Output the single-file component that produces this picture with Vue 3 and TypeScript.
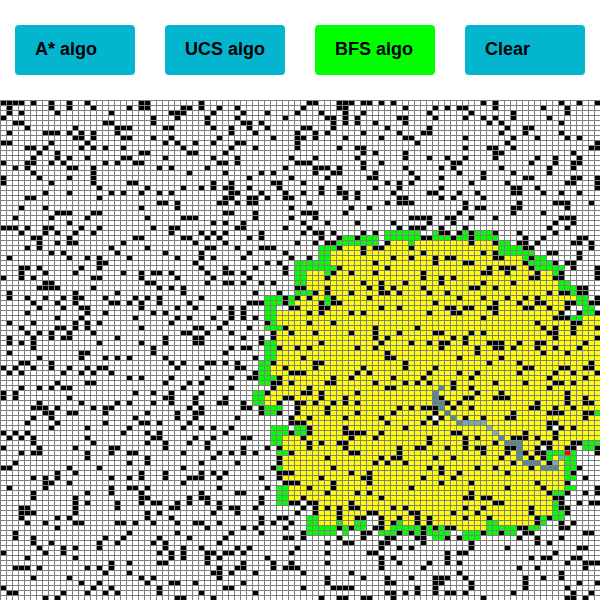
<script setup lang="ts">
import { ref } from 'vue'

interface Block { col: number; row: number; cells: string }

const CELL_W = 6
const CELL_H = 5

const buttons = ['A* algo', 'UCS algo', 'BFS algo', 'Clear']
const active = ref('BFS algo')

// Walls by block: rows are separated by "/", each lists column offsets.
const wallBlocks: Block[] = [
  { col: 0, row: 0, cells: `0-3 5 8 11 14 23-24 33/1 8 11 15 21 23-24 30-31 33 36 39/1 3 9 18 28-30 35/0 25 29 34 39/2-3 17-18 25 34/4 12 19-21 27-28 35 38/1 7-9 11 13 15 19 38/12-13 15 20-21 25 28 36/0-1 8 14 27 29 32 35 39/4-5 7 13 15 17 20 30 38/6 9 23-24 31-32 37/5 9 11 14 20-21 27 35 39/0 4-5 8 10 17 19 22-23 36-37 39/2 4 11-12 15 26 28 34/5 15 31 37/0 6 11 15/0 8 15 21-22 35 38/16 24 30 33 35 37-38/7 11 18 20 23 26 28 38-39/4-5 16 37-38/26-27 29 36-37 39/3 7 23 29/9-11 15-16 37-38/2 8 14 24 30-32/11 35 37/0-2 4 7-8 13 16 25 28-29 39/3 7 9 12 15 28 33 35 37/5-6 11 22-23 30-31 34 36/6 9 11-12 20 32 37/4 6 18 24 34-35 39/8 10 19 27 33/1 11 14 16 21 29 33 35/16-17 32/3-4 6 13 16 33 37` },
  { col: 0, row: 34, cells: `3 7 12 20 23 25-26 28 34 37-38/0 3 5 15-16 23 29 35/7-8 24-25 34 37-38/6-9 15 26 28 30/1 12 19 30/1 4 7 10 12-13 17 22 24 26 33/5 9 12 18-19 21 23 26 31/6 10 13-14 23 29 32 36 38/4 14 17 25 27 38/9 13 22 29 31 35 38/1 5 12 14 16 28 37/3 9-10 12 14 23 32-33 36/4 6 8 11 15 30-31 34 38/1 5 8 10-11 19 27 32-33/1 3 5 16 23 27 32-33/5 25 38/1 13-14 25 37/6 13 17 19 21 27/3-4 8 28 30 34-35 37 39/0 2 5 8 11 14 16-17 29 33 39/1 3 10 13 15 18/21 23 28 34 38/9 14-15 27 31 33/3 6 8 10-11 30 38/0 2 22 25 28 33/0 2 11 27-28 32 37/6 13 19 21 25 28 32 36-37/5-7 9 15 17-18 31 33/7-8 11-12 17 24 29 32-33/5 8 22 29 32 39/4 9 17 23-24 26 31/8 14 21 30 33 35 38/0 2 4 20 24 26 37/1 3 5 14 25-26 32 35` },
  { col: 0, row: 68, cells: `5 15 24 27 31 34/0 6 12 18-19 27 34/3 5-6 14 18 21-22 30 36 38/14 24 35/2 21 24 33 39/0-1 11 16 30/9 12 23 27 33 35 37/5 7 9 18 21 23 27 31-33 36/7-8 11 30/1 7 18 21-22 24 36/5 14 18 23 33 39/5 12 23-24 31 33-34/12 14 19 23 25-26 29 31 34 36/3-4 12 19 28-29 36 38-39/3-5 12 24 26 35 39/3 9 11 24 28/4 7 12-13 19-20 22 25 29 32-33 36/9 34/2 21 29 38/2 5 17 20 26 31 37/5 8 16 19 25 27 36/6 10 12 16 27 30 33 39/0 7 10 26 28 30 34-35 37-38/4 12 28 30 34 36/18 21 26-27 34/2-4 6 14 16 18 36 39/17 21 35-36 38/5 11 23 25 36/13 16 24 28-29 32/0 15 18 26 37-38/1-2 10 14 17 19 26 33/7 9 29-30 35` },
  { col: 40, row: 0, cells: `11-12 16-18 20-21 23 25 40 42 53 56 59/10 16-17 27 32 34 36-37 42 50 54/0 4 9 13 17 20 31 38 45 54/7 14-15 17 19 26-27 32 37 40 42 45 51/0-1 3 15 17 19 22 27 41 43 53/1 4 10-11 15 24 31 44 47-48/2 9 12 14 20 26 30-31 43 47 53/5 9-10 12 17 23 27-28 37 45 49 54 56/0 9 29 44 59/2 9 16 19-20 37 41-42 45 58-59/20 22 27 42-43 55/8 12 19 27 31 34 37 42 49 52 56/9-11 20 23 35-36 48 52 55-56/7 12-14 16 20 27 33 35 43 51 55/3 5 12 15-16 22 28 36 40 45 51/1 8 14 21-22 29 33 40 47-48 55-56 59/5-6 10 24 26 28 38 44 54-55 59/1 6 13 16 22 26 33 45-46 49 59/3 7 10 13 16-17 19 25 31-32 36 39 45-46 50 53 56/1-2 4 7-8 17 19 26-27 33 35 40/1-2 11 24 26-28 37 46 52-54 58/8 18 21 37 39-40 45-46 54/2 10-12 17 36 45 50/2 8 12 28-31 34-35 38 42 53-55` },
  { col: 40, row: 24, cells: `0 10 14 19 25/0 7 11 26 28-29/3 10 12-13 15 20 22/1 3 13 16 19/9 12 14-15 24/3-5 16 20 22-23 28/1 7 20/0 8 11 25 28/4 6 22/2 7 16 24/0 7 15 18 22/1 14/0 3 5 20 23 27/9-10 14 21 23 25/2 6 12 14 18 23-24 26/7 9 11 15 21/1-3 7 13 15-16/0 8-9 13-14 23 26/0 11 13 18 20/0 2/4 11 15/1 7 22 29/5 8 12 18 22 26/0 3 5 22 24/3 13 23 28/0-1 6 9 11 19 22/24/2 10 24-25/5 12-13 27/0 7 12 20 27/2 8-10 19 21/1-2 6 15 18 25` },
  { col: 70, row: 24, cells: `1 5 22 25/0 3 7 21 24/3-4 6 8 12 16 22/0-1 5 8 17 20 26-27/8 12 16-17 19 25-26 28/17-18 28/0 10 12 21-22 26/2 4-5 12-13 18 26/2 7-8 17 22 24-25/11 13-15 18 25 29/0 10-11 14 19 23 29/0 3 5 18-19 22-23 29/3 10 15/0 8-9 12 26-27/1 4 21 23-24 26-27/6 10 14 17 19 29/2 12 16 19-20 24-25 28-29/4-5 7-8 11-12 17-18 21 24/1 5-6 12 23 26 29/10 22-24/19 25-26/20 22 25 29/2-3 8 10 21-22 25/5 7 22 29/1 3-4 7 11-13 16 19-20 27/3 9 12-13 15 19 22 26/9 20 24/6 13/11 16 28/2 17-18 23-24 27-28/1 6 9 16 22 25 29/0 8 21 27` },
  { col: 40, row: 56, cells: `5-6 8 14-15 22 27 29/5 11 24-25/4 10-11 13 19/7-8 13 17/0 6 9-10 12 15 17 19/0-1 3 9 14 26 28/3 6 9 14 19 25/8 11 17 23/8-10 24/11 17 27/8 11 17-20 23/0-1 10 18 22/11 13 16-17/0 4 6 11 17 26 29/0 2 8 18-19 26/6 14 23 25-26/6 22 24 27/5 15/6-8 18 21/3 6 13 20-21` },
  { col: 70, row: 56, cells: `1 5 12 17 22-23 25/5 8 21/9 13 24/3 7-8 12-14 24 27/4 6 19 24 27-28/0-2 5 8 18-19 22 25/2 15 21-23 27-28/1 3 7 10 14-15 27/0 2 21-22/21 23 25/5-6 17 22/1 7 9 15-17 19 22/1 7 12 20-21 25-26/0 4 7 9-10 14-15 19 21 24-25 29/10 14 17 19-20 29/2 5 13 18 20/15 21/1 3 9 12 18 26/3 6 14 25/0 5 27` },
  { col: 40, row: 76, cells: `7-9 15 21 33 38 49 54/4 11 15 28 44 50 59/0 14 19 21 38 51 54 57 59/3 10 23 37-38 40-41 52-53/3 8-9 11-12 18 42-43 53 56 58-59/2 10 12 14 16 18-19 25 27 37 40 48 53-54/9 12 16 21-22 28-29 35 39 48 54/3 6-7 16 19-20 23 26 29 31 37 41 49 51/3 5 8 23 25 29 31 49 53 55/0 2 7 16 18 22-23 30 32 34-35 46-47 53-54/3 10 20-21 26 28 30 40 43 47-48 57-58/7-8 10 16 20 24-25 29-30 34 36 46 49 53/14 17-18 23-24 30 38 49 51/1 9 23 26 28 38 44 56-57/0 8 14 21-22 34 36-37 52/4 23 25 34 48 50-51 55-56/0 5 8 14 23 26 31 34 36 54 57-59/0 5 7-9 23 30 46 49 57/2 10 18 36 53/14 20 24 28 32-34 37 47 50 53/0 14 24-25 32-33 38 47 56 59/10 15-18 29 32 38 47 54/2 24-25 27 29 32 34-35 37 45 55 58/13 16-17 20-21 25 40 54-55 57` },
]

const explored: Block = {
  col: 0, row: 28,
  cells: `65-81/57-82/55-81/55-86/55-86/57-87/51-91/51-91/51-92/51-92/52-92/50-95/49-93/48-93/46-92/46-91 97-99/46-99/47-99/46-99/46-99/46-99/46-99/46-99/46-99/45-99/45-99/45-99/46-99/46-99/45-99/45-99/44-99/44-45 50-99/50-99/50-98/49-71 73-99/50-99/52-91 93-99/52-99/47-99/47-96/47-89 91-95/48-90/47-92/47-93/47-93/48-93/47-93/50-93/48-93/48-91/48-91/53-91/53-91/53-91/53-60 63-88/53-58 64-88/64 76-80`,
}

const frontier: Block = {
  col: 0, row: 26,
  cells: `64-69 72 77 79-81/57-58 60-62 64-69 72-74 76-77 79-82/56-62 68 83-84/53-55 83-86/53-54 83-88/53-54 87 89-90/49-54 88-91/49-55 89-93/49-50 54 92/49-50/49-50 93-94/93-95/49-51 95/44-46 48 54 96-97/44-46 48 54 96-97/44-45 97-98/44-45 97-98/44-45 95-96/45/44-46///44-45/44-45/44-45/44-45/43-44/43-44/43-44/43-45/43-44//42-43/42-43/42-43/44-46/44-45 99///45-47 49-50/45-47 49-50/45-46/45-46 97-99/97-98/46-47 91-93 95/91 94-95/94-95/46 94-95/94/94-95//46-47 94-95/46-47 92-93/46-47/46-47 92/92/92-93/51-52 90 92-93/51-52 56 59-60 66 81-82 90/51-55 57 59-60 65-69 71 73 81-85 88-89/51-55 57 63-65 67 69 71-74 77-79 81-82 84-85/72-73 77-79`,
}

const trail: Block = { col: 0, row: 57, cells: `73/72/72/72-73/73/74/75/76///83/84-86/86/86/86/87-89/90-92` }
const trailLight: Block = { col: 0, row: 64, cells: `77-80/81/82/////93/92` }
const target: Block = { col: 0, row: 70, cells: `94` }
const board: Block = { col: 0, row: 0, cells: Array(100).fill('0-99').join('/') }

function toPath(block: Block): string {
  let d = ''
  block.cells.split('/').forEach((line, r) => {
    for (const span of line.split(' ').filter(Boolean)) {
      const [from, to = from] = span.split('-').map(Number)
      for (let c = from; c <= to; c++) {
        const x = (block.col + c) * CELL_W + 1
        const y = (block.row + r) * CELL_H + 1
        d += `M${x} ${y}h5v4h-5z`
      }
    }
  })
  return d
}

const layers = [
  { name: 'open', d: toPath(board) },
  { name: 'explored', d: toPath(explored) },
  { name: 'frontier', d: toPath(frontier) },
  { name: 'wall', d: wallBlocks.map(toPath).join('') },
  { name: 'trail', d: toPath(trail) },
  { name: 'trail-light', d: toPath(trailLight) },
  { name: 'target', d: toPath(target) },
]
</script>

<template>
  <main class="app">
    <nav class="toolbar">
      <button
        v-for="label in buttons"
        :key="label"
        class="btn"
        :class="{ active: label === active }"
        @click="active = label"
      >{{ label }}</button>
    </nav>
    <svg class="grid" width="600" height="500" viewBox="0 0 600 500" shape-rendering="crispEdges">
      <path v-for="layer in layers" :key="layer.name" :class="layer.name" :d="layer.d" />
    </svg>
  </main>
</template>

<style>
body {
  margin: 0;
  background: #fff;
}
</style>

<style scoped>
.app {
  width: 600px;
  height: 600px;
  overflow: hidden;
  background: #fff;
}
.toolbar {
  display: flex;
  gap: 30px;
  height: 100px;
  padding: 25px 15px;
  box-sizing: border-box;
}
.btn {
  width: 120px;
  height: 50px;
  padding: 0 0 2px 20px;
  border: 0;
  border-radius: 4px;
  background: #03b5cf;
  color: #000;
  font: bold 18px/20px "Liberation Sans", Arial, sans-serif;
  text-align: left;
  white-space: nowrap;
}
.btn.active {
  background: #00ff00;
}
.grid {
  display: block;
  background: #808080;
}
.open { fill: #fff; }
.explored { fill: #ffff00; }
.frontier { fill: #00ff00; }
.wall { fill: #000; }
.trail { fill: #528b8b; }
.trail-light { fill: #79aeae; }
.target { fill: #ff0000; }
</style>
